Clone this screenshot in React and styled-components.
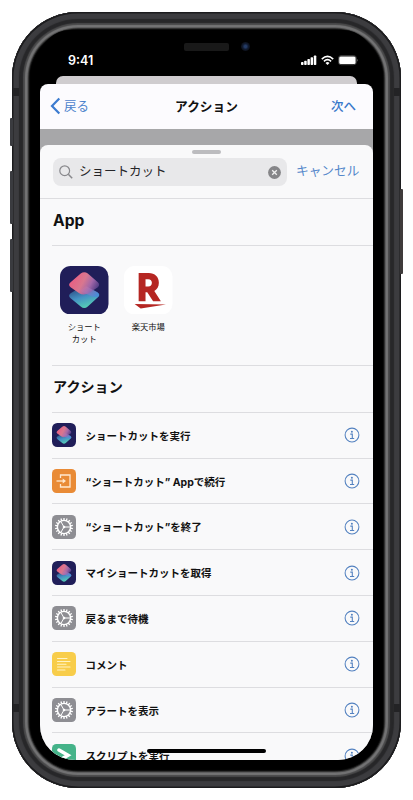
import React from "react";
import styled, { createGlobalStyle } from "styled-components";

const Global = createGlobalStyle`
  * { box-sizing: border-box; }
  html, body { margin: 0; background: #fff; }
  body {
    width: 413px; height: 800px; overflow: hidden;
    font-family: Inter, "Noto Sans CJK JP", sans-serif;
    color: #111;
  }
  svg { display: block; flex: none; }
`;

const Stage = styled.main`
  width: 413px; height: 800px; padding: 12px;
  position: relative;
`;

const SideButton = styled.i`
  position: absolute;
  left: ${(p) => (p.$right ? 400 : 10)}px;
  top: ${(p) => p.$top}px;
  width: 3px; height: ${(p) => p.$h}px;
  border-radius: 1px;
  background: ${(p) => (p.$right ? "#3f3b3b" : "#3a3b3f")};
`;

const Antenna = styled.i`
  position: absolute;
  left: ${(p) => p.$left}px; top: ${(p) => p.$top}px;
  width: 6px; height: 8px;
  background: #232325;
`;

const Phone = styled.div`
  width: 389px; height: 776px; padding: 17.5px 28px 28.5px;
  border-radius: 66px;
  background: #000;
  box-shadow: inset 0 0 0 1.5px #1c1c1e, inset 0 0 1px 7px #3c3c3f,
    inset 0 0 1px 11px #272729, inset 0 0 1px 13px #4a4a4b,
    inset 0 0 1px 15.5px #757576, inset 0 0 1px 16.5px #4a4a4a,
    inset 0 0 1px 17.5px #151515;
  display: flex; flex-direction: column;
`;

const Screen = styled.div`
  flex: 1; min-height: 0;
  display: flex; flex-direction: column;
  position: relative;
  overflow: hidden;
  border-radius: 30px 30px 35px 35px;
  background: #000;
`;

const Speaker = styled.i`
  position: absolute; left: 144px; top: 13px;
  width: 45px; height: 8px; border-radius: 2px; background: #191919;
`;

const Camera = styled.i`
  position: absolute; left: 201px; top: 12px;
  width: 9px; height: 9px; border-radius: 50%;
  background: radial-gradient(circle, #243b65 0 18%, #111b30 45%, #0b0e15 75%);
`;

const StatusBar = styled.header`
  height: 46.5px; flex: none; padding: 22px 14px 0 28px;
  display: flex; justify-content: space-between; align-items: flex-start;
  color: #fff; font-size: 12.5px; line-height: 18px; font-weight: 600;
`;

const StatusIcons = styled.div`
  display: flex; gap: 4px; padding-top: 3px;
`;

const BackSheet = styled.div`
  height: 8px; flex: none; margin: 0 16px;
  border-radius: 7px 7px 0 0; background: #cfcccf;
`;

const NavBackdrop = styled.div`
  flex: none; background: #000;
`;

const NavBar = styled.nav`
  height: 45px; padding: 0 17px 2px 10px;
  border-radius: 8px 8px 0 0;
  background: #fcfbfe;
  display: flex; justify-content: space-between; align-items: center;
`;

const BackLink = styled.a`
  display: flex; align-items: center; gap: 3px;
  color: #4b82cc; font-size: 12.5px;
`;

const NextLink = styled.a`
  width: 39px; text-align: right; color: #3978ca; font-size: 12.5px; font-weight: 500;
`;

const NavTitle = styled.h1`
  margin: 0; padding-left: 7px; font-size: 12.7px; font-weight: 700;
`;

const Dimmed = styled.div`
  flex: 1; min-height: 0; padding-top: 16px;
  background: #a7a7a9;
  display: flex;
`;

const Sheet = styled.section`
  flex: 1; min-width: 0; overflow: hidden;
  border-radius: 8px 8px 0 0; background: #f9f9fa;
`;

const Grabber = styled.div`
  width: 29px; height: 4px; margin: 4.5px auto 4.5px;
  border-radius: 2px; background: #bcbcbf;
`;

const SearchRow = styled.div`
  height: 41px; padding: 0 13px; display: flex; gap: 9px;
  border-bottom: 1px solid #dddde0;
`;

const SearchField = styled.div`
  width: 234px; height: 28px; padding: 0 6px;
  display: flex; align-items: center; gap: 6px;
  border-radius: 8px; background: #e8e8ea;
  font-size: 12.5px; color: #252528;
  span { flex: 1; padding-bottom: 3px; }
`;

const Cancel = styled.a`
  font-size: 12.7px; line-height: 26px; color: #5487ca; white-space: nowrap;
`;

const Heading = styled.h2`
  height: ${(p) => p.$h}px; margin: 0 0 0 12px; padding: 0 0 ${(p) => p.$lift}px 1px;
  display: flex; align-items: center;
  font-size: ${(p) => p.$size}px; font-weight: 700;
  border-bottom: 1px solid #dddde0;
`;

const Apps = styled.div`
  height: 120px; margin-left: 12px; padding: 20px 0 0 8px;
  display: flex; gap: 15.5px;
  border-bottom: 1px solid #dddde0;
`;

const AppTile = styled.div`
  width: 48.5px; display: flex; flex-direction: column; align-items: center; gap: 8px;
  font-size: 8.3px; line-height: 11.5px; text-align: center; white-space: pre;
`;

const Row = styled.div`
  height: 45.8px; margin-left: 12px; padding-right: 13px;
  display: flex; align-items: center; gap: 9.5px;
  border-bottom: 1px solid #dddde0;
  font-size: 10.5px; font-weight: 700;
  span { flex: 1; white-space: nowrap; }
`;

const HomeBar = styled.i`
  position: absolute; left: 107px; bottom: 6.5px;
  width: 119px; height: 4px; border-radius: 2px; background: #000;
`;

const ShortcutsIcon = ({ size }) => (
  <svg width={size} height={size} viewBox="0 0 48 48">
    <defs>
      <linearGradient id="pink" x1="0" y1="0.3" x2="1" y2="0.7">
        <stop offset="0" stopColor="#ec5a80" />
        <stop offset="0.45" stopColor="#d9778f" />
        <stop offset="0.7" stopColor="#a267a8" />
        <stop offset="1" stopColor="#43367f" />
      </linearGradient>
      <linearGradient id="blue" x1="0.2" y1="0.1" x2="0.55" y2="1">
        <stop offset="0" stopColor="#2c4a80" />
        <stop offset="0.5" stopColor="#4592c4" />
        <stop offset="1" stopColor="#56d0b4" />
      </linearGradient>
      <linearGradient id="violet" x1="0" y1="0" x2="1" y2="0.6">
        <stop offset="0" stopColor="#e4708c" />
        <stop offset="0.6" stopColor="#9a78c0" />
        <stop offset="1" stopColor="#4b85e0" />
      </linearGradient>
    </defs>
    <rect width="48" height="48" rx="10.500" fill="#201e59" />
    <path d="M10.500 27 L22 20 Q24 18.800 26 20 L37 26 Q40.500 28.500 37.500 31 L27.500 40 Q24 43.200 20.500 40 L10.500 32 Q7.500 29.500 10.500 27Z" fill="url(#blue)" />
    <path d="M10.500 16 L20.500 7.500 Q24 4.800 27.500 7.500 L37.500 16 Q40 18.500 37.500 21 L30 26 Q24 30 19 27 L10.500 21 Q7.500 18.500 10.500 16Z" fill="url(#pink)" />
    <path d="M19 24.500 L26 20 L37.200 26.200 Q40 28.500 37.500 31 Q32 31 27 28Z" fill="url(#violet)" opacity="0.65" />
  </svg>
);

const RakutenIcon = () => (
  <svg width="48.500" height="48.500" viewBox="0 0 48 48">
    <rect width="48" height="48" rx="10.500" fill="#fff" />
    <path fill="#b52622" fillRule="evenodd" d="M14.500 7H24.500C30.500 7 34.500 10.800 34.500 16.500C34.500 20.300 32.800 23 30 24.700L36.500 35H28.800L23 26H21.300V35H14.500ZM21.300 13V20.300H24C26.300 20.300 27.600 18.900 27.600 16.600C27.600 14.400 26.300 13 24 13Z" />
    <path fill="#b52622" d="M10.500 37.500L41.500 38L16.500 42Z" />
  </svg>
);

const teeth = Array.from({ length: 18 }, (_, i) => i * 20);
const GearIcon = () => (
  <svg width="24" height="24" viewBox="0 0 24 24">
    <rect width="24" height="24" rx="4.500" fill="#8e8e93" />
    <g stroke="#fff" fill="none">
      <circle cx="12" cy="12" r="6.600" strokeWidth="1.400" />
      {teeth.map((a) => (
        <path key={a} d="M12 3V5.500" strokeWidth="1.300" transform={`rotate(${a} 12 12)`} />
      ))}
      <path d="M12 12H18M12 12L9 6.800M12 12L9 17.200" strokeWidth="1" />
    </g>
    <circle cx="12" cy="12" r="1.300" fill="#fff" />
  </svg>
);

const ContinueIcon = () => (
  <svg width="24" height="24" viewBox="0 0 24 24">
    <rect width="24" height="24" rx="4.500" fill="#e98b36" />
    <path d="M8.500 9V6H18V18H8.500V15" fill="none" stroke="#ffe9d0" strokeWidth="1.300" />
    <path d="M4.500 12H12" stroke="#ffe9d0" strokeWidth="1.300" />
    <path d="M10.700 9.500L14 12L10.700 14.500Z" fill="#ffe9d0" />
  </svg>
);

const CommentIcon = () => (
  <svg width="24" height="24" viewBox="0 0 24 24">
    <rect width="24" height="24" rx="4.500" fill="#f8cd4a" />
    <path d="M5.500 6.500H15M5.500 9.500H18M5.500 12.200H14M5.500 15H18M5.500 18H13" stroke="#fff3c4" strokeWidth="1.100" strokeLinecap="round" />
  </svg>
);

const ScriptIcon = () => (
  <svg width="24" height="24" viewBox="0 0 24 24">
    <rect width="24" height="24" rx="4.500" fill="#45b389" />
    <path d="M7 6L16 11.300L7 16.500" fill="none" stroke="#fff" strokeWidth="3.500" strokeLinecap="round" />
  </svg>
);

const InfoIcon = () => (
  <svg width="16" height="16" viewBox="0 0 16 16">
    <circle cx="8" cy="8" r="6.900" fill="none" stroke="#5482c0" strokeWidth="1.050" />
    <circle cx="7.900" cy="4.700" r="1" fill="#5482c0" />
    <path d="M6.300 7.100H8.300V11.400M6 11.500H10.200" fill="none" stroke="#5482c0" strokeWidth="1.100" />
  </svg>
);

const actions = [
  ["ショートカットを実行", <ShortcutsIcon size={24} />],
  ["“ショートカット” Appで続行", <ContinueIcon />],
  ["“ショートカット”を終了", <GearIcon />],
  ["マイショートカットを取得", <ShortcutsIcon size={24} />],
  ["戻るまで待機", <GearIcon />],
  ["コメント", <CommentIcon />],
  ["アラートを表示", <GearIcon />],
  ["スクリプトを実行", <ScriptIcon />],
];

export default function App() {
  return (
    <Stage>
      <Global />
      <SideButton $top={118} $h={28} />
      <SideButton $top={171} $h={53} />
      <SideButton $top={239} $h={53} />
      <SideButton $right $top={189} $h={85} />
      <Phone>
        <Screen>
          <Speaker />
          <Camera />
          <StatusBar>
            <span>9:41</span>
            <StatusIcons>
              <svg width="16" height="11" viewBox="0 0 16 11" fill="#fff">
                <rect x="0" y="7" width="2.500" height="3" rx=".7" />
                <rect x="3.200" y="5.700" width="2.500" height="4.300" rx=".7" />
                <rect x="6.400" y="4" width="2.500" height="6" rx=".7" />
                <rect x="9.600" y="2.300" width="2.500" height="7.700" rx=".7" />
                <rect x="12.800" y="0.600" width="2.500" height="9.400" rx=".7" />
              </svg>
              <svg width="13" height="11" viewBox="0 0 13 11" fill="none" stroke="#fff">
                <path d="M.8 4.100Q6.500-1.200 12.200 4.100M2.900 6.300Q6.500 3 10.100 6.300" strokeWidth="1.600" />
                <path d="M4.500 7.900Q6.500 6.200 8.500 7.900L6.500 10Z" fill="#fff" stroke="none" />
              </svg>
              <svg width="21" height="11" viewBox="0 0 21 11">
                <rect x=".5" y=".7" width="17.800" height="9" rx="2.500" fill="none" stroke="#555" strokeWidth=".8" />
                <rect x="1.200" y="1.400" width="16.400" height="7.600" rx="1.500" fill="#fff" />
                <path d="M19.200 3.700Q20.700 5.200 19.200 6.700Z" fill="#777" />
              </svg>
            </StatusIcons>
          </StatusBar>
          <BackSheet />
          <NavBackdrop>
            <NavBar>
              <BackLink>
                <svg width="11" height="18" viewBox="0 0 11 18">
                  <path d="M9.300 1.500L2 9L9.300 16.500" fill="none" stroke="#3c7bd0" strokeWidth="2.200" />
                </svg>
                戻る
              </BackLink>
              <NavTitle>アクション</NavTitle>
              <NextLink>次へ</NextLink>
            </NavBar>
          </NavBackdrop>
          <Dimmed>
            <Sheet>
              <Grabber />
              <SearchRow>
                <SearchField>
                  <svg width="14" height="14" viewBox="0 0 14 14" fill="none" stroke="#88888c" strokeWidth="1.200">
                    <circle cx="5.700" cy="5.700" r="4.900" />
                    <path d="M9.300 9.300L13.200 13.200" strokeWidth="1.500" />
                  </svg>
                  <span>ショートカット</span>
                  <svg width="13" height="13" viewBox="0 0 13 13">
                    <circle cx="6.500" cy="6.500" r="6.400" fill="#858588" />
                    <path d="M4.200 4.200L8.800 8.800M8.800 4.200L4.200 8.800" stroke="#f0f0f0" strokeWidth="1.300" />
                  </svg>
                </SearchField>
                <Cancel>キャンセル</Cancel>
              </SearchRow>
              <Heading $h={46.5} $lift={2} $size={15.6}>App</Heading>
              <Apps>
                <AppTile><ShortcutsIcon size={48.5} />{"ショート\nカット"}</AppTile>
                <AppTile><RakutenIcon />楽天市場</AppTile>
              </Apps>
              <Heading $h={47.4} $lift={5} $size={14.1}>アクション</Heading>
              {actions.map(([label, icon]) => (
                <Row key={label}>{icon}<span>{label}</span><InfoIcon /></Row>
              ))}
            </Sheet>
          </Dimmed>
          <HomeBar />
        </Screen>
      </Phone>
      <Antenna $left={13} $top={88} />
      <Antenna $left={394} $top={88} />
      <Antenna $left={13} $top={704} />
      <Antenna $left={394} $top={704} />
    </Stage>
  );
}
